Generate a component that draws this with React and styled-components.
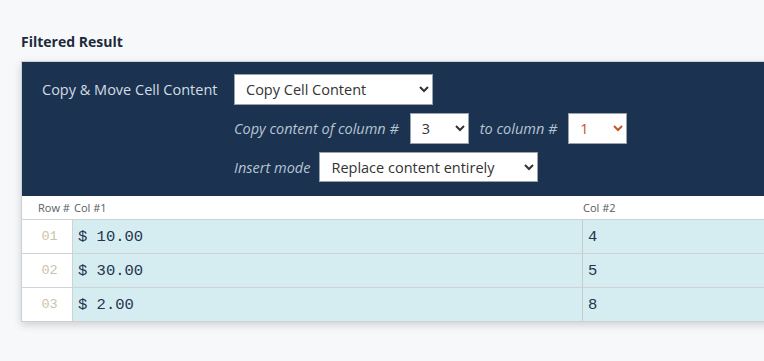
import React from 'react';
import styled, { createGlobalStyle } from 'styled-components';

const GlobalStyle = createGlobalStyle`
    body {
        margin: 0;
        background: #f7f8fa;
        font-family: 'Open Sans', 'Liberation Sans', sans-serif;
        overflow: hidden;
    }
`;

const Page = styled.div`
    padding: 33px 0 40px 21px;
    width: 820px;
`;

const Heading = styled.h3`
    margin: 0 0 10px;
    font-size: 14px;
    font-weight: 700;
    color: #1c2a3b;
    line-height: 18px;
`;

const Card = styled.div`
    border: 1px solid #cdd1d6;
    box-shadow: 0 3px 8px rgba(0, 0, 0, 0.16);
    background: #fff;
`;

const Panel = styled.div`
    background: #1b3350;
    padding: 12px 20px 14px 20px;
    display: grid;
    grid-template-columns: 192px auto;
    row-gap: 8px;
    align-items: center;
`;

const Label = styled.span`
    font-size: 14.5px;
    color: ${p => (p.$italic ? '#b7c4d3' : '#d3dbe4')};
    font-style: ${p => (p.$italic ? 'italic' : 'normal')};
`;

const Controls = styled.div`
    grid-column: 2;
    display: flex;
    align-items: center;
    gap: ${p => p.$gap || 11}px;
`;

const Select = styled.select`
    height: ${p => p.$h || 31}px;
    width: ${p => p.$w}px;
    font-family: 'Open Sans', 'Liberation Sans', sans-serif;
    font-size: 14.5px;
    color: ${p => (p.$accent ? '#c0552a' : '#333')};
    background: #fff;
    border: 1px solid #9aa3ad;
    border-radius: 0;
    padding: 0 7px;
`;

const Grid = styled.div`
    display: grid;
    grid-template-columns: 51px 509px 1fr;
`;

const HeadCell = styled.div`
    height: 23px;
    display: flex;
    align-items: center;
    font-size: 11px;
    color: #555d66;
    padding-left: ${p => p.$pl || 0}px;
    border-bottom: 1px solid #cfd3d6;
`;

const NumCell = styled.div`
    height: 33px;
    display: flex;
    align-items: center;
    justify-content: center;
    padding-left: 5px;
    font-family: 'Liberation Mono', 'Courier New', monospace;
    font-size: 13.5px;
    color: #cbc3a9;
    background: #fff;
    border-right: 1px solid #cfd3d6;
    border-bottom: ${p => (p.$last ? 'none' : '1px solid #cfd3d6')};
`;

const DataCell = styled.div`
    height: 33px;
    display: flex;
    align-items: center;
    padding-left: 5px;
    font-family: 'Liberation Mono', 'Courier New', monospace;
    font-size: 15.5px;
    color: #24344e;
    background: #d5ecf0;
    border-left: ${p => (p.$divider ? '1px solid #c4ccd0' : 'none')};
    border-bottom: ${p => (p.$last ? 'none' : '1px solid #cfd3d6')};
`;

const rows = [
    ['01', '$ 10.00', '4'],
    ['02', '$ 30.00', '5'],
    ['03', '$ 2.00', '8'],
];

export default function App() {
    return (
        <Page>
            <GlobalStyle />
            <Heading>Filtered Result</Heading>
            <Card>
                <Panel>
                    <Label>Copy &amp; Move Cell Content</Label>
                    <Controls>
                        <Select $w={199} defaultValue="copy">
                            <option value="copy">Copy Cell Content</option>
                            <option value="move">Move Cell Content</option>
                        </Select>
                    </Controls>
                    <Controls>
                        <Label $italic>Copy content of column #</Label>
                        <Select $w={59} defaultValue="3">
                            <option>1</option>
                            <option>2</option>
                            <option>3</option>
                        </Select>
                        <Label $italic>to column #</Label>
                        <Select $w={59} $accent defaultValue="1">
                            <option>1</option>
                            <option>2</option>
                            <option>3</option>
                        </Select>
                    </Controls>
                    <Controls $gap={9}>
                        <Label $italic>Insert mode</Label>
                        <Select $w={219} $h={30} defaultValue="replace">
                            <option value="replace">Replace content entirely</option>
                            <option value="prepend">Prepend to content</option>
                            <option value="append">Append to content</option>
                        </Select>
                    </Controls>
                </Panel>
                <Grid>
                    <HeadCell $pl={16}>Row #</HeadCell>
                    <HeadCell $pl={1}>Col #1</HeadCell>
                    <HeadCell $pl={1}>Col #2</HeadCell>
                    {rows.map(([n, a, b], i) => {
                        const last = i === rows.length - 1;
                        return (
                            <React.Fragment key={n}>
                                <NumCell $last={last}>{n}</NumCell>
                                <DataCell $last={last}>{a}</DataCell>
                                <DataCell $last={last} $divider>{b}</DataCell>
                            </React.Fragment>
                        );
                    })}
                </Grid>
            </Card>
        </Page>
    );
}
